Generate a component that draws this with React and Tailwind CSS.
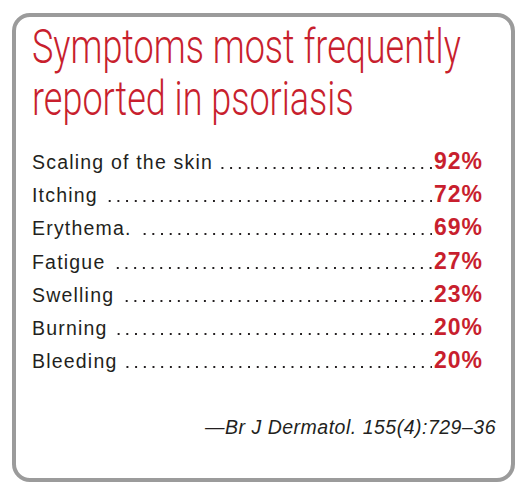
const rows = [
  { label: 'Scaling of the skin', value: '92%' },
  { label: 'Itching', value: '72%' },
  { label: 'Erythema.', value: '69%' },
  { label: 'Fatigue', value: '27%' },
  { label: 'Swelling', value: '23%' },
  { label: 'Burning', value: '20%' },
  { label: 'Bleeding', value: '20%' },
];

export default function App() {
  return (
    <div className="w-[526px] h-[496px] bg-white pl-[12px] pt-[13px]">
      <div className="w-[503px] h-[469px] border-4 border-[#9b9b9b] rounded-[18px] bg-white pl-[16px] pr-[28px] pt-[4px]">
        {/* condensed headline */}
        <h1 className="text-[#c81f2e] text-[48px] leading-[52px] font-light whitespace-nowrap origin-left scale-x-[0.75] font-['Roboto',sans-serif]">
          Symptoms most frequently
          <br />
          reported in psoriasis
        </h1>

        <div className="mt-[25px] flex flex-col font-['Liberation_Sans',Arial,sans-serif]">
          {rows.map((r) => (
            <div key={r.label} className="flex items-baseline h-[33.2px]">
              <span className="text-[19.5px] leading-none text-[#231f20] tracking-[1.2px]">{r.label}</span>
              <span className="flex-1 h-[2px] ml-[6px] mr-[2px] bg-[linear-gradient(to_left,#231f20_2px,transparent_2px)] bg-[length:8.7px_2px] bg-repeat-x bg-right" />
              <span className="text-[23px] leading-none font-bold text-[#c81f2e] tracking-[1px]">{r.value}</span>
            </div>
          ))}
        </div>

        <p className="mt-[36px] -mr-[13px] text-right italic text-[19.5px] leading-none tracking-[0.5px] text-[#231f20] font-['Liberation_Sans',Arial,sans-serif]">
          —Br J Dermatol. 155(4):729–36
        </p>
      </div>
    </div>
  );
}
